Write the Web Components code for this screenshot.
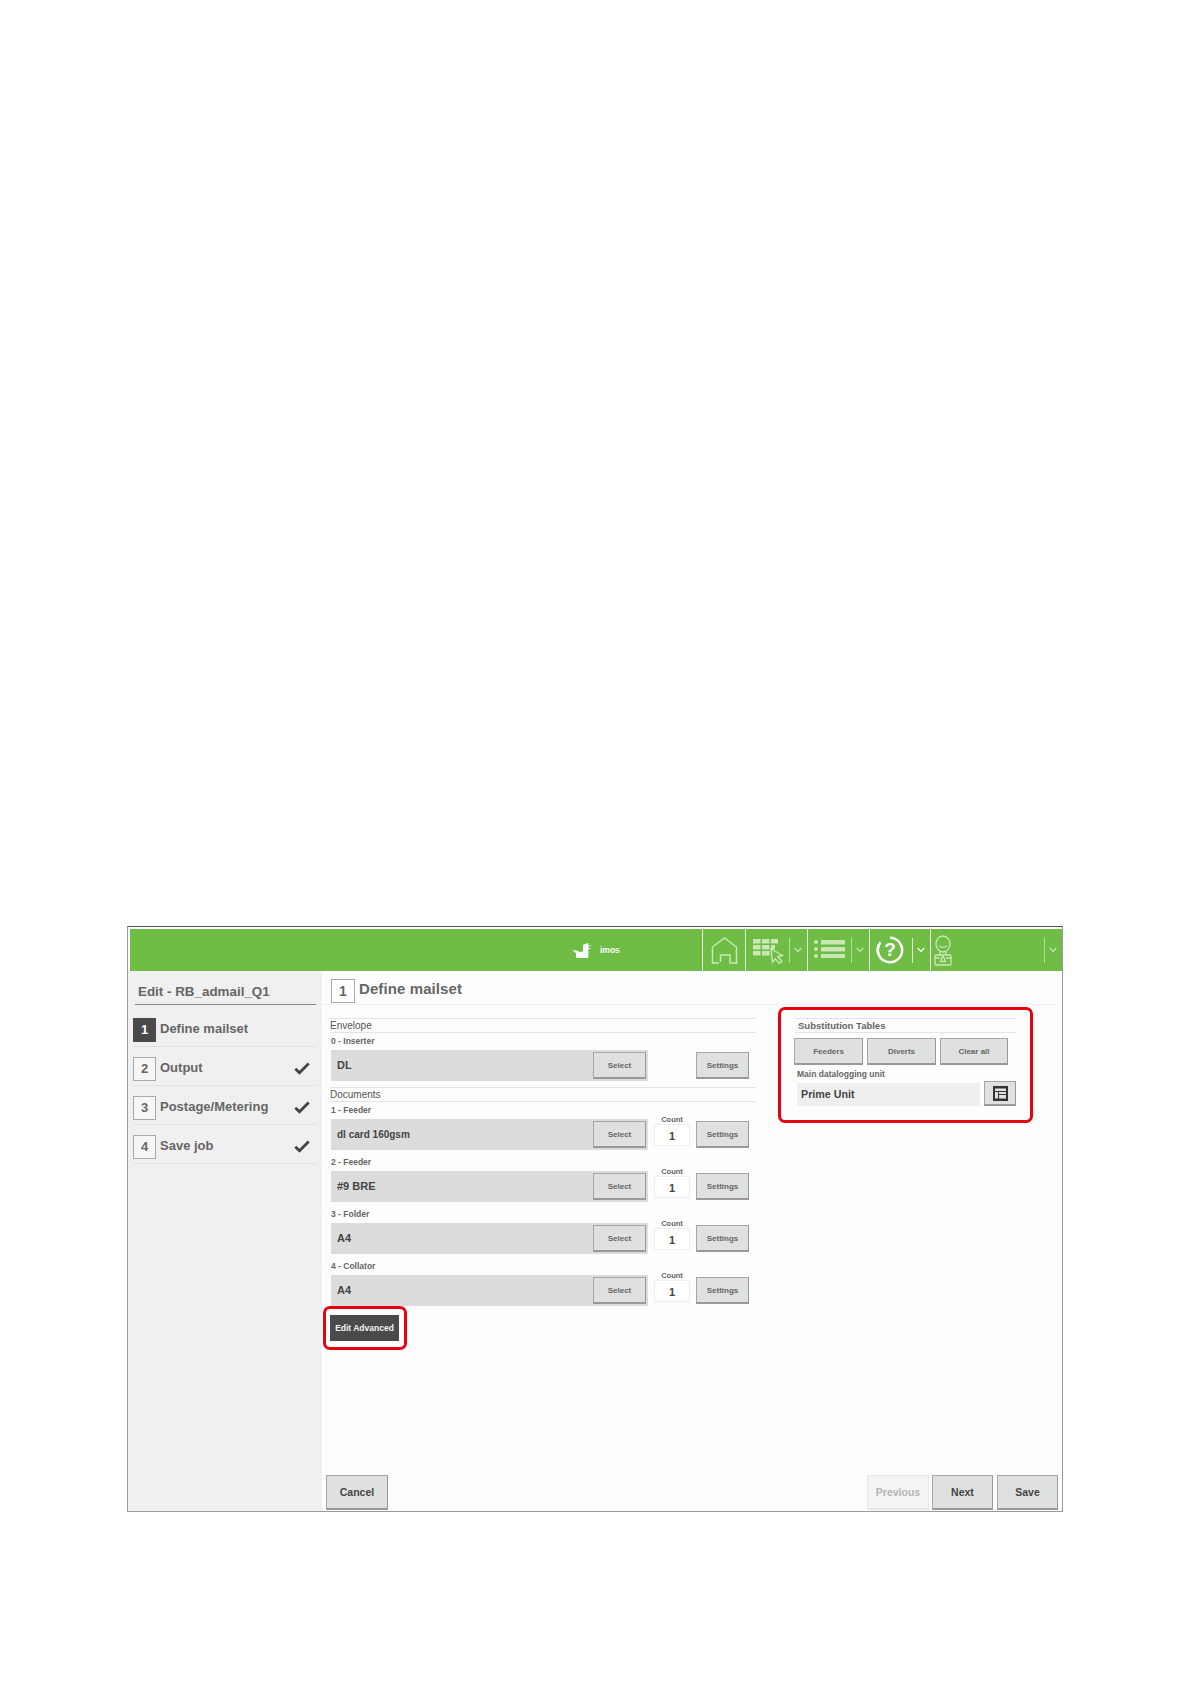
<!DOCTYPE html>
<html lang="en">
<head>
<meta charset="utf-8">
<title>Edit - RB_admail_Q1</title>
<style>
    html, body { margin: 0; background: #fff; }
    body { font-family: "Liberation Sans", Arial, sans-serif; padding: 926px 0 0 127px; width: 1064px; box-sizing: border-box; }
</style>
</head>
<body>
<app-frame>
    <top-bar slot="top"></top-bar>
    <side-nav slot="side" title="Edit - RB_admail_Q1">
        <nav-step num="1" active>Define mailset</nav-step>
        <nav-step num="2" done>Output</nav-step>
        <nav-step num="3" done>Postage/Metering</nav-step>
        <nav-step num="4" done>Save job</nav-step>
    </side-nav>
    <step-page slot="main" num="1" heading="Define mailset">
        <div slot="left">
            <section-head>Envelope</section-head>
            <doc-row label="0 - Inserter" value="DL" nocount first></doc-row>
            <section-head style="margin-top:6px">Documents</section-head>
            <doc-row label="1 - Feeder" value="dl card 160gsm" first small></doc-row>
            <doc-row label="2 - Feeder" value="#9 BRE"></doc-row>
            <doc-row label="3 - Folder" value="A4"></doc-row>
            <doc-row label="4 - Collator" value="A4"></doc-row>
            <red-callout style="display:inline-block;margin:0 0 0 -7px;padding:6px 5px 6px 4px">
                <ui-button dark w="69" h="26" size="8.5">Edit Advanced</ui-button>
            </red-callout>
        </div>
        <red-callout slot="right" style="padding:8px 14px 0;margin-top:-1px">
            <sub-tables></sub-tables>
        </red-callout>
        <ui-button slot="footer-left" w="62" h="35" size="10.5" strong>Cancel</ui-button>
        <ui-button slot="footer-right" w="62" h="35" size="10.5" strong disabled>Previous</ui-button>
        <ui-button slot="footer-right" w="61" h="35" size="10.5" strong style="margin-right:1px">Next</ui-button>
        <ui-button slot="footer-right" w="61" h="35" size="10.5" strong>Save</ui-button>
    </step-page>
</app-frame>

<script>
class AppFrame extends HTMLElement {
    constructor() {
        super();
        this.attachShadow({ mode: "open" });
        this.shadowRoot.innerHTML = `
        <style>
            :host {
                display: flex;
                flex-direction: column;
                width: 936px;
                height: 586px;
                box-sizing: border-box;
                border: 1px solid #9a9a9a;
                border-top-color: #555;
                background: #fdfdfd;
            }
            .top { padding: 2px 0 0 2px; }
            .body { flex: 1; display: flex; min-height: 0; }
            .side { width: 194px; flex: none; background: #f0f0f0; }
            .main { flex: 1; min-width: 0; }
        </style>
        <div class="top"><slot name="top"></slot></div>
        <div class="body">
            <div class="side"><slot name="side"></slot></div>
            <div class="main"><slot name="main"></slot></div>
        </div>
        `;
    }
}
customElements.define("app-frame", AppFrame);

const CHEVRON = `<svg class="chev" width="8" height="6" viewBox="0 0 8 6"><path d="M.7 1l3.3 3.4L7.3 1" fill="none" stroke="currentColor" stroke-width="1.2"/></svg>`;

class TopBar extends HTMLElement {
    constructor() {
        super();
        this.attachShadow({ mode: "open" });
        this.shadowRoot.innerHTML = `
        <style>
            :host {
                display: flex;
                height: 42px;
                background: #6fbd45;
                color: #c9e8b6;
            }
            .brand {
                flex: 1;
                display: flex;
                align-items: center;
                gap: 6px;
                padding-left: 442px;
                color: #fff;
                font-size: 8.5px;
                font-weight: bold;
            }
            .cell {
                display: flex;
                align-items: center;
                box-sizing: border-box;
                border-left: 1.5px solid #f2f8ec;
                padding-right: 5px;
            }
            .home { width: 43px; padding-left: 8px; }
            .grid { width: 62px; padding-left: 7px; }
            .list { width: 62px; padding-left: 6px; }
            .help { width: 61px; padding-left: 6px; color: #fff; }
            .user { width: 132px; padding-left: 2px; }
            .div { margin-left: auto; width: 1px; height: 25px; background: currentColor; opacity: .75; margin-right: 4px; }
            .qm { position: absolute; left: 0; right: 0; top: 3px; text-align: center; font-size: 19px; font-weight: bold; line-height: 22px; color: #fff; }
            .ring { position: relative; width: 28px; height: 28px; }
            svg { display: block; flex: none; }
        </style>
        <div class="brand">
            <svg width="22" height="15" viewBox="0 0 20 14" fill="#fff"><path d="M0 6.500l5 .8 1.500 1.200L10 8V1.600L15 0v2.600l3.200-1-3.200 2v1.200l3.400-.6-3.400 1.700V14H3.600V9.600z"/></svg>
            <span>imos</span>
        </div>
        <div class="cell home">
            <svg width="27" height="27" viewBox="0 0 27 27" fill="none" stroke="currentColor" stroke-width="1.5"><path d="M8 26H1.500V10L13.500 1l12 9v16H19V18H9.500v7"/></svg>
        </div>
        <div class="cell grid">
            <svg width="32" height="27" viewBox="0 0 32 27" fill="currentColor"><path d="M0 2h7.500v4.500H0zM9 2h7.500v4.500H9zM18 2h7v4.500h-7zM0 8h7.500v4.500H0zM9 8h7.500v4.500H9zM18 8h4v4.500h-4zM0 14h7.500v4.500H0zM9 14h7.500v4.500H9z"/><path d="M18 12l11.500 6.500-4.500 1.200 3.800 4.500-2.600 2.200-3.800-4.500-2.900 3.300z" fill="#6fbd45" stroke="currentColor" stroke-width="1.400"/></svg>
            <span class="div"></span>${CHEVRON}
        </div>
        <div class="cell list">
            <svg width="31" height="20" viewBox="0 0 31 20" fill="currentColor"><path d="M7 0h24v4.500H7zM7 7h24v4.500H7zM7 14h24v4H7z"/><circle cx="2" cy="2" r="2"/><circle cx="2" cy="9" r="2"/><circle cx="2" cy="16" r="2"/></svg>
            <span class="div"></span>${CHEVRON}
        </div>
        <div class="cell help">
            <div class="ring">
                <svg width="28" height="28" viewBox="0 0 28 28" fill="none" stroke="#fff" stroke-width="2.500"><path d="M14 1.800A12.200 12.200 0 1 1 4.500 6.300"/><path d="M2.300 17.500A12.200 12.200 0 0 1 3.300 8"/></svg>
                <div class="qm">?</div>
            </div>
            <span class="div"></span>${CHEVRON}
        </div>
        <div class="cell user">
            <svg width="20" height="31" viewBox="0 0 20 31" fill="none" stroke="currentColor" stroke-width="1.300"><ellipse cx="10" cy="9" rx="7" ry="8"/><path d="M6 10.500c1.500 2.500 6.500 2.500 8 0"/><path d="M7 17v3M13 17v3"/><rect x="2" y="20" width="16" height="10" rx="1"/><path d="M2 23h5M13 23h5M10 20.500l2.500 6h-5z"/></svg>
            <span class="div"></span>${CHEVRON}
        </div>
        `;
    }
}
customElements.define("top-bar", TopBar);

class SideNav extends HTMLElement {
    constructor() {
        super();
        this.attachShadow({ mode: "open" });
    }
    connectedCallback() {
        this.shadowRoot.innerHTML = `
        <style>
            :host { display: block; padding: 0 6px 0 5px; color: #666; }
            .title {
                height: 33px;
                border-bottom: 1px solid #888;
                margin: 0 0 3px 2px;
                padding-left: 3px;
                font-size: 13.4px;
                font-weight: bold;
                line-height: 41px;
            }
        </style>
        <div class="title">${this.getAttribute("title")}</div>
        <slot></slot>
        `;
    }
}
customElements.define("side-nav", SideNav);

class NavStep extends HTMLElement {
    constructor() {
        super();
        this.attachShadow({ mode: "open" });
    }
    connectedCallback() {
        const check = this.hasAttribute("done")
            ? `<svg class="check" width="16" height="13" viewBox="0 0 16 13"><path d="M1.300 6.800l4.200 4L14.700 1.500" fill="none" stroke="#444" stroke-width="2.800"/></svg>`
            : "";
        this.shadowRoot.innerHTML = `
        <style>
            :host {
                display: flex;
                align-items: center;
                height: 39px;
                box-sizing: border-box;
                padding-top: 5px;
                border-bottom: 1px solid #e3e3e3;
                font-size: 13px;
                font-weight: bold;
                color: #666;
            }
            .num {
                width: 23px;
                height: 24px;
                box-sizing: border-box;
                flex: none;
                display: flex;
                align-items: center;
                justify-content: center;
                border: 1px solid #aaa;
                background: #f6f6f6;
                font-size: 13px;
            }
            :host([active]) .num { background: #4a4a4a; border-color: #4a4a4a; color: #fff; }
            .label { margin: -2px 0 0 4px; flex: 1; }
            .check { margin: 0 6px 0 0; }
        </style>
        <span class="num">${this.getAttribute("num")}</span>
        <span class="label"><slot></slot></span>
        ${check}
        `;
    }
}
customElements.define("nav-step", NavStep);

class StepPage extends HTMLElement {
    constructor() {
        super();
        this.attachShadow({ mode: "open" });
    }
    connectedCallback() {
        this.shadowRoot.innerHTML = `
        <style>
            :host { display: flex; flex-direction: column; height: 100%; box-sizing: border-box; }
            header {
                height: 34px;
                box-sizing: border-box;
                padding: 8px 0 0 9px;
                margin-right: 6px;
                border-bottom: 1px solid #f0f0f0;
                display: flex;
                align-items: flex-start;
                gap: 4px;
                color: #666;
            }
            .num {
                width: 24px;
                height: 24px;
                box-sizing: border-box;
                border: 1px solid #aaa;
                background: #fff;
                display: flex;
                align-items: center;
                justify-content: center;
                font-size: 14px;
                font-weight: bold;
            }
            h1 { margin: 0; font-size: 15px; line-height: 20px; letter-spacing: .1px; }
            .content {
                flex: 1;
                display: grid;
                grid-template-columns: 426px 255px;
                column-gap: 22px;
                align-content: start;
                padding: 3px 0 0 8px;
            }
            .left { padding-top: 10px; }
            footer {
                display: flex;
                justify-content: space-between;
                padding: 0 4px 1px 4px;
            }
            .group { display: flex; gap: 3px; }
        </style>
        <header>
            <span class="num">${this.getAttribute("num")}</span>
            <h1>${this.getAttribute("heading")}</h1>
        </header>
        <div class="content">
            <div class="left"><slot name="left"></slot></div>
            <div class="right"><slot name="right"></slot></div>
        </div>
        <footer>
            <div class="group"><slot name="footer-left"></slot></div>
            <div class="group"><slot name="footer-right"></slot></div>
        </footer>
        `;
    }
}
customElements.define("step-page", StepPage);

class SectionHead extends HTMLElement {
    constructor() {
        super();
        this.attachShadow({ mode: "open" });
        this.shadowRoot.innerHTML = `
        <style>
            :host {
                display: block;
                height: 15px;
                box-sizing: border-box;
                border-top: 1px solid #e4e4e4;
                border-bottom: 1px solid #e4e4e4;
                font-size: 10px;
                line-height: 14px;
                color: #555;
            }
        </style>
        <slot></slot>
        `;
    }
}
customElements.define("section-head", SectionHead);

class UiButton extends HTMLElement {
    constructor() {
        super();
        this.attachShadow({ mode: "open" });
    }
    connectedCallback() {
        const w = this.getAttribute("w") || 53;
        const h = this.getAttribute("h") || 27;
        const size = this.getAttribute("size") || 8;
        this.shadowRoot.innerHTML = `
        <style>
            :host {
                display: inline-flex;
                align-items: center;
                justify-content: center;
                flex: none;
                width: ${w}px;
                height: ${h}px;
                box-sizing: border-box;
                background: #dfe0e0;
                border: 1px solid #a6a6a6;
                border-right-color: #999;
                border-bottom: 2px solid #999;
                font-size: ${size}px;
                font-weight: bold;
                color: #666;
            }
            :host([strong]) { color: #444; }
            :host([dark]) { background: #4a4a4a; border-color: #4a4a4a; color: #f4f4f4; }
            :host([disabled]) { background: #f4f4f4; border-color: #e6e6e6; color: #b5b5b5; }
        </style>
        <slot></slot>
        `;
    }
}
customElements.define("ui-button", UiButton);

class DocRow extends HTMLElement {
    constructor() {
        super();
        this.attachShadow({ mode: "open" });
    }
    connectedCallback() {
        const noCount = this.hasAttribute("nocount");
        this.shadowRoot.innerHTML = `
        <style>
            :host { display: block; padding-left: 1px; }
            .label {
                height: ${this.hasAttribute("first") ? 17 : 21}px;
                box-sizing: border-box;
                display: flex;
                align-items: flex-end;
                padding-bottom: 3px;
                font-size: 8.5px;
                line-height: 12px;
                font-weight: bold;
                color: #666;
            }
            .row { display: flex; align-items: center; height: 31px; gap: 6px; }
            .bar {
                width: 317px;
                height: 31px;
                box-sizing: border-box;
                display: flex;
                align-items: center;
                justify-content: space-between;
                padding: 0 2px 0 6px;
                background: #dcdcdc;
                font-size: ${this.hasAttribute("small") ? 10 : 11}px;
                font-weight: bold;
                color: #444;
            }
            .bar span { margin-top: -1px; }
            .count {
                width: 36px;
                height: 31px;
                display: flex;
                flex-direction: column;
                justify-content: flex-end;
                padding-bottom: 4px;
                box-sizing: border-box;
                text-align: center;
                font-size: 7.5px;
                line-height: 9px;
                font-weight: bold;
                color: #666;
            }
            .count b {
                display: block;
                flex: none;
                height: 22px;
                box-sizing: border-box;
                border: 1px solid #eee;
                background: #fff;
                font-size: 11px;
                line-height: 22px;
                color: #444;
            }
        </style>
        <div class="label">${this.getAttribute("label")}</div>
        <div class="row">
            <div class="bar">
                <span>${this.getAttribute("value")}</span>
                <ui-button>Select</ui-button>
            </div>
            <div class="count" style="${noCount ? "visibility:hidden" : ""}">Count<b>1</b></div>
            <ui-button>Settings</ui-button>
        </div>
        `;
    }
}
customElements.define("doc-row", DocRow);

class RedCallout extends HTMLElement {
    constructor() {
        super();
        this.attachShadow({ mode: "open" });
        this.shadowRoot.innerHTML = `
        <style>
            :host {
                display: block;
                box-sizing: border-box;
                border: 3px solid #e8000f;
                border-radius: 7px;
            }
            ::slotted(*) { vertical-align: top; }
        </style>
        <slot></slot>
        `;
    }
}
customElements.define("red-callout", RedCallout);

class SubTables extends HTMLElement {
    constructor() {
        super();
        this.attachShadow({ mode: "open" });
        this.shadowRoot.innerHTML = `
        <style>
            :host { display: block; height: 102px; box-sizing: border-box; color: #666; }
            .buttons { display: flex; gap: 4px; margin: 5px 0 0 -1px; }
            .cap { font-size: 8.5px; line-height: 12px; height: 12px; margin: 3px 0 0 2px; font-weight: bold; }
            .pick { display: flex; gap: 4px; align-items: flex-end; margin-top: 1px; }
            .field {
                width: 183px;
                height: 23px;
                margin-left: 2px;
                box-sizing: border-box;
                padding-left: 4px;
                background: #efefef;
                font-size: 10.7px;
                line-height: 23px;
                font-weight: bold;
                color: #444;
            }
            svg { display: block; }
            section-head { font-size: 9.5px; font-weight: bold; color: #666; padding-left: 3px; }
        </style>
        <section-head>Substitution Tables</section-head>
        <div class="buttons">
            <ui-button w="69">Feeders</ui-button>
            <ui-button w="69">Diverts</ui-button>
            <ui-button w="68">Clear all</ui-button>
        </div>
        <div class="cap">Main datalogging unit</div>
        <div class="pick">
            <div class="field">Prime Unit</div>
            <ui-button w="32" h="25">
                <svg width="15" height="15" viewBox="0 0 15 15"><rect width="15" height="15" fill="#333"/><path d="M2 2.500h11v2.500H2zM6 6h7v2H6zM6 9h7v3.500H6zM2 6h3v6.500H2z" fill="#dfe0e0"/></svg>
            </ui-button>
        </div>
        `;
    }
}
customElements.define("sub-tables", SubTables);
</script>
</body>
</html>
